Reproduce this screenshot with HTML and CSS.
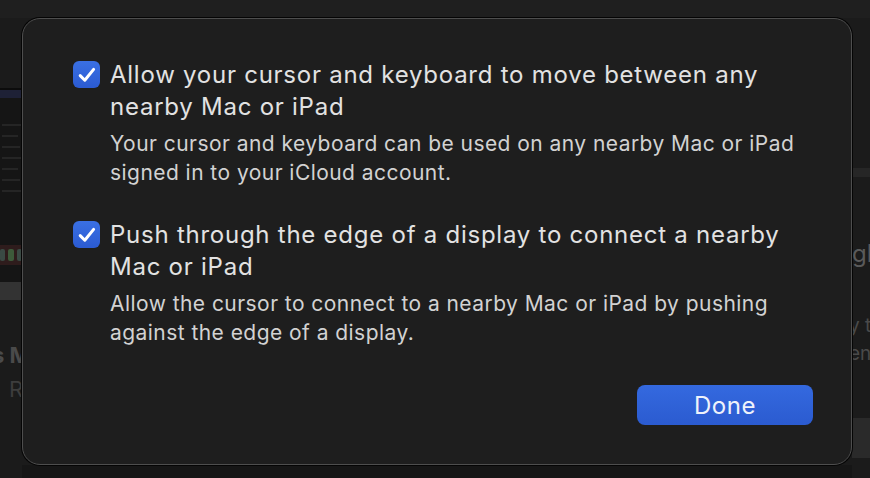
FILE: index.html
```html
<html>

<head>
  <title>Universal Control</title>
  <link rel="stylesheet" href="styles.css">
</head>

<body>
  <div class="screen">
    <div class="topbar"></div>

    <div class="side side-left">
      <div class="thumb">
        <div class="thumb-head"></div>
        <div class="thumb-body">
          <div class="tline w1"></div>
          <div class="tline w2"></div>
          <div class="tline w3"></div>
          <div class="tline w1"></div>
          <div class="tline w2"></div>
          <div class="tline w3"></div>
          <div class="tline w1"></div>
        </div>
        <div class="thumb-dock"><span class="dot"></span><span class="dot green"></span><span class="dot"></span></div>
        <div class="thumb-gap"></div>
        <div class="thumb-bar"></div>
      </div>
      <div class="ghost ghost-bold"><span>Shows M</span></div>
      <div class="ghost ghost-re">Re</div>
    </div>

    <div class="dialog">
      <div class="option">
        <span class="check">
          <svg width="18" height="16" viewBox="0 0 18 16"><path d="M2.2 8.6 L6.8 13.2 L15.6 2.4" fill="none" stroke="#fff" stroke-width="3" stroke-linecap="round" stroke-linejoin="round"/></svg>
        </span>
        <div class="option-text">
          <div class="option-title">Allow your cursor and keyboard to move between any nearby Mac or iPad</div>
          <div class="option-desc">Your cursor and keyboard can be used on any nearby Mac or iPad signed in to your iCloud account.</div>
        </div>
      </div>

      <div class="option">
        <span class="check">
          <svg width="18" height="16" viewBox="0 0 18 16"><path d="M2.2 8.6 L6.8 13.2 L15.6 2.4" fill="none" stroke="#fff" stroke-width="3" stroke-linecap="round" stroke-linejoin="round"/></svg>
        </span>
        <div class="option-text">
          <div class="option-title">Push through the edge of a display to connect a nearby Mac or iPad</div>
          <div class="option-desc">Allow the cursor to connect to a nearby Mac or iPad by pushing against the edge of a display.</div>
        </div>
      </div>

      <div class="actions">
        <button type="button" class="done">Done</button>
      </div>
    </div>

    <div class="side side-right">
      <div class="band"></div>
      <div class="ghost ghost-big">gl</div>
      <div class="ghost ghost-small">y t</div>
      <div class="ghost ghost-small">ent</div>
      <div class="panel"></div>
    </div>

    <div class="bottom"></div>
  </div>
</body>

</html>
```

FILE: styles.css
```css
    body {
      margin: 0;
      background: #1b1b1b;
      font-family: Inter, "Noto Sans", sans-serif;
      overflow: hidden;
    }

    .screen {
      width: 870px;
      height: 478px;
      display: grid;
      grid-template-columns: 22px 830px 18px;
      grid-template-rows: 18px 447px 13px;
    }

    .topbar {
      grid-column: 1 / 4;
      background: #1f1f1f;
    }

    .side {
      overflow: hidden;
      background: #1b1b1b;
    }

    .side-left {
      grid-column: 1;
      grid-row: 2 / 4;
      display: flex;
      flex-direction: column;
    }

    .thumb {
      margin-top: 70px;
      display: flex;
      flex-direction: column;
      height: 212px;
      background: #151515;
    }

    .thumb-head {
      height: 8px;
      border-top: 2px solid #0c0c0c;
      background: #1e2136;
    }

    .thumb-body {
      display: flex;
      flex-direction: column;
      gap: 9px;
      padding: 26px 0 0 2px;
      height: 120px;
    }

    .tline {
      height: 2px;
      background: #252525;
    }

    .w1 { width: 20px; }
    .w2 { width: 16px; }
    .w3 { width: 18px; }

    .thumb-dock {
      display: flex;
      gap: 3px;
      padding: 4px 0;
      height: 12px;
      background: #2e1c1c;
      margin-top: 4px;
    }

    .dot {
      width: 8px;
      height: 12px;
      border-radius: 2px;
      background: #3a4a44;
    }

    .dot.green {
      background: #3d5a3a;
    }

    .thumb-gap {
      height: 18px;
    }

    .thumb-bar {
      height: 18px;
      background: #333333;
    }

    .ghost {
      font-size: 22px;
      color: #3d3d3d;
      white-space: nowrap;
    }

    .ghost-bold {
      margin-top: 42px;
      display: flex;
      justify-content: flex-end;
      font-weight: 700;
      color: #4a4a4a;
    }

    .ghost-bold span {
      margin-right: -8px;
    }

    .ghost-re {
      margin-top: 8px;
      padding-left: 9px;
    }

    .dialog {
      grid-column: 2;
      grid-row: 2;
      background: #1e1e1e;
      border: 1px solid #4e4e4e;
      border-radius: 18px;
      box-shadow: 0 0 0 1px #050505;
      padding: 40px 38px 0 50px;
      display: flex;
      flex-direction: column;
      gap: 32px;
      position: relative;
      z-index: 1;
    }

    .option {
      display: flex;
      gap: 10px;
      align-items: flex-start;
    }

    .check {
      flex: none;
      width: 27px;
      height: 27px;
      margin-top: 2px;
      border-radius: 6px;
      background: linear-gradient(#3a70e3, #2b5bd3);
      display: flex;
      align-items: center;
      justify-content: center;
    }

    .option-text {
      flex: 1;
    }

    .option-title {
      font-size: 24px;
      line-height: 32px;
      letter-spacing: 0.75px;
      color: #e2e2e2;
    }

    .option-desc {
      margin-top: 6px;
      font-size: 21px;
      line-height: 29px;
      letter-spacing: 0.45px;
      color: #d2d2d2;
    }

    .actions {
      display: flex;
      justify-content: flex-end;
      margin-top: 6px;
    }

    .done {
      width: 176px;
      height: 40px;
      border: none;
      border-radius: 8px;
      background: linear-gradient(#3469df, #2b5bd0);
      color: #eef2fb;
      font-family: inherit;
      font-size: 24px;
      letter-spacing: 0.5px;
    }

    .side-right {
      grid-column: 3;
      grid-row: 2 / 4;
      display: flex;
      flex-direction: column;
    }

    .band {
      margin-top: 150px;
      height: 9px;
      background: #262626;
    }

    .ghost-big {
      margin-top: 62px;
      font-size: 24px;
      color: #5a5a5a;
    }

    .ghost-small {
      margin-left: -3px;
      font-size: 19px;
      line-height: 28px;
      color: #4a4a4a;
    }

    .ghost-big + .ghost-small {
      margin-top: 44px;
    }

    .panel {
      margin-top: 50px;
      height: 40px;
      background: #2a2a2a;
    }

    .bottom {
      grid-column: 2;
      grid-row: 3;
      background: #161616;
    }
```
